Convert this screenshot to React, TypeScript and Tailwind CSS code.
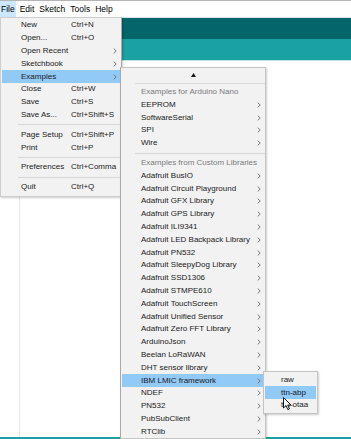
import * as React from 'react';

type Item = { label: string; shortcut?: string; arrow?: boolean; active?: boolean; header?: boolean } | 'sep';

const fileItems: Item[] = [
  { label: 'New', shortcut: 'Ctrl+N' },
  { label: 'Open...', shortcut: 'Ctrl+O' },
  { label: 'Open Recent', arrow: true },
  { label: 'Sketchbook', arrow: true },
  { label: 'Examples', arrow: true, active: true },
  { label: 'Close', shortcut: 'Ctrl+W' },
  { label: 'Save', shortcut: 'Ctrl+S' },
  { label: 'Save As...', shortcut: 'Ctrl+Shift+S' },
  'sep',
  { label: 'Page Setup', shortcut: 'Ctrl+Shift+P' },
  { label: 'Print', shortcut: 'Ctrl+P' },
  'sep',
  { label: 'Preferences', shortcut: 'Ctrl+Comma' },
  'sep',
  { label: 'Quit', shortcut: 'Ctrl+Q' },
];

const exampleItems: Item[] = [
  { label: 'Examples for Arduino Nano', header: true },
  { label: 'EEPROM', arrow: true },
  { label: 'SoftwareSerial', arrow: true },
  { label: 'SPI', arrow: true },
  { label: 'Wire', arrow: true },
  'sep',
  { label: 'Examples from Custom Libraries', header: true },
  { label: 'Adafruit BusIO', arrow: true },
  { label: 'Adafruit Circuit Playground', arrow: true },
  { label: 'Adafruit GFX Library', arrow: true },
  { label: 'Adafruit GPS Library', arrow: true },
  { label: 'Adafruit ILI9341', arrow: true },
  { label: 'Adafruit LED Backpack Library', arrow: true },
  { label: 'Adafruit PN532', arrow: true },
  { label: 'Adafruit SleepyDog Library', arrow: true },
  { label: 'Adafruit SSD1306', arrow: true },
  { label: 'Adafruit STMPE610', arrow: true },
  { label: 'Adafruit TouchScreen', arrow: true },
  { label: 'Adafruit Unified Sensor', arrow: true },
  { label: 'Adafruit Zero FFT Library', arrow: true },
  { label: 'ArduinoJson', arrow: true },
  { label: 'Beelan LoRaWAN', arrow: true },
  { label: 'DHT sensor library', arrow: true },
  { label: 'IBM LMIC framework', arrow: true, active: true },
  { label: 'NDEF', arrow: true },
  { label: 'PN532', arrow: true },
  { label: 'PubSubClient', arrow: true },
  { label: 'RTClib', arrow: true },
];

const lmicItems: Item[] = [{ label: 'raw' }, { label: 'ttn-abp', active: true }, { label: 'ttn-otaa' }];

function Chevron() {
  return (
    <svg width="4" height="6" viewBox="0 0 4 6" className="shrink-0">
      <path d="M0.7 0.6 L3.2 3 L0.7 5.4" fill="none" stroke="#6b6b6b" strokeWidth="0.9" />
    </svg>
  );
}

function MenuRows({ items, labelWidth, pad, sepLeft }: { items: Item[]; labelWidth?: string; pad: string; sepLeft: string }) {
  return (
    <>
      {items.map((it, i) =>
        it === 'sep' ? (
          <div key={i} className="h-[7px] flex items-center">
            <div className={`${sepLeft} flex-1 border-t border-[#d7d7d7]`} />
          </div>
        ) : (
          <div
            key={i}
            className={`h-[12.8px] flex items-center ${pad} pr-[3px] mx-[1px] ${
              it.active ? 'bg-[#91c9f7]' : ''
            } ${it.header ? 'text-[#7a7a7a]' : 'text-[#1a1a1a]'}`}
          >
            <span className={`${labelWidth ?? 'flex-1'} whitespace-nowrap`}>{it.label}</span>
            {labelWidth && <span className="flex-1 whitespace-nowrap">{it.shortcut ?? ''}</span>}
            {it.arrow && <Chevron />}
          </div>
        )
      )}
    </>
  );
}

function Cursor() {
  return (
    <svg width="9" height="14" viewBox="0 0 9 14" className="absolute left-[283px] top-[397px]">
      <path
        d="M0.5 0.5 L0.5 11 L3 8.6 L4.8 12.6 L6.4 11.9 L4.7 8 L8 8 Z"
        fill="#ffffff"
        stroke="#000000"
        strokeWidth="0.9"
        strokeLinejoin="round"
      />
    </svg>
  );
}

export default function App() {
  return (
    <div
      className="relative w-[351px] h-[439px] overflow-hidden bg-white text-[8px] leading-none"
      style={{ fontFamily: '"Liberation Sans", Arial, sans-serif' }}
    >
      {/* menubar */}
      <div className="h-[17px] flex items-center gap-[3px] border-t border-[#b4b4b4] bg-white text-[8.5px]">
        <span className="h-[16px] flex items-center px-[1px] bg-[#cce8ff]">File</span>
        <span className="px-[1px]">Edit</span>
        <span className="px-[1px]">Sketch</span>
        <span className="px-[1px]">Tools</span>
        <span className="px-[1px]">Help</span>
      </div>

      {/* ide body */}
      <div className="border-t border-[#d8e6e6]">
        <div className="h-[21px] bg-[#04656a]" />
        <div className="h-[21px] bg-[#19a1a4]" />
        <div className="h-[1px] bg-[#bfe3e3]" />
        <div className="h-[376px] flex">
          <div className="w-[20px] border-r border-[#e6e6e6]" />
          <div className="flex-1" />
        </div>
        <div className="h-[3px] bg-[#19a1a4]" />
      </div>

      {/* File menu */}
      <div className="absolute left-0 top-[17px] w-[122px] pt-[1px] pb-[2px] bg-[#f2f2f2] border border-[#cdcdcd] border-r-[#a8a8a8] shadow-[1px_1px_2px_rgba(0,0,0,0.2)]">
        <MenuRows items={fileItems} labelWidth="w-[50px]" pad="pl-[19px]" sepLeft="ml-[17px] mr-[1px]" />
      </div>

      {/* Examples submenu */}
      <div className="absolute left-[120px] top-[67px] w-[146px] pt-[1px] bg-[#f2f2f2] border border-[#c4c4c4] border-l-[#a8a8a8] shadow-[1px_1px_2px_rgba(0,0,0,0.2)]">
        <div className="h-[12px] flex items-center justify-center">
          <svg width="5" height="4" viewBox="0 0 5 4">
            <path d="M2.5 0 L5 4 L0 4 Z" fill="#1a1a1a" />
          </svg>
        </div>
        <div className="h-[4.6px] flex items-center">
          <div className="ml-[14px] flex-1 border-t border-[#dcdcdc]" />
        </div>
        <MenuRows items={exampleItems} pad="pl-[19px]" sepLeft="ml-[14px]" />
      </div>

      {/* IBM LMIC submenu */}
      <div className="absolute left-[263px] top-[371px] w-[55px] pt-[1.5px] pb-[1px] bg-[#f2f2f2] border border-[#c4c4c4] shadow-[1px_1px_2px_rgba(0,0,0,0.2)]">
        <MenuRows items={lmicItems} pad="pl-[16px]" sepLeft="ml-[10px]" />
      </div>

      <Cursor />
    </div>
  );
}
